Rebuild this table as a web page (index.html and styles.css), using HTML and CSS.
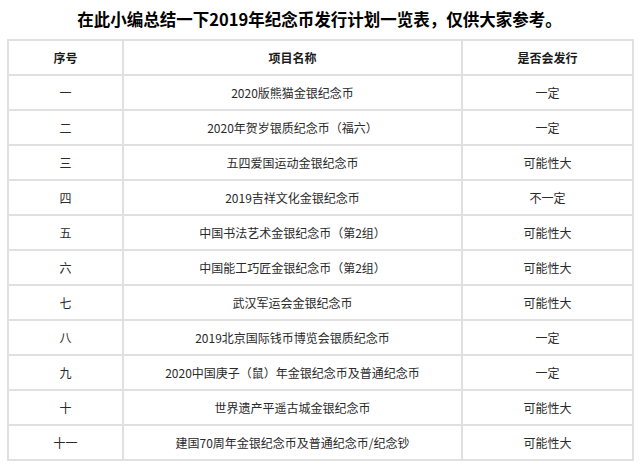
FILE: index.html
```html
<!DOCTYPE html>
<html lang="zh-CN">
<head>
<meta charset="utf-8">
<title>2019年纪念币发行计划一览表</title>
<link rel="stylesheet" href="styles.css">
</head>
<body>
<div class="page">
  <h1 class="title">在此小编总结一下2019年纪念币发行计划一览表，仅供大家参考。</h1>
  <table class="plan">
    <colgroup>
      <col class="c1"><col class="c2"><col class="c3">
    </colgroup>
    <thead>
      <tr><th>序号</th><th>项目名称</th><th>是否会发行</th></tr>
    </thead>
    <tbody>
      <tr><td>一</td><td>2020版熊猫金银纪念币</td><td>一定</td></tr>
      <tr><td>二</td><td>2020年贺岁银质纪念币（福六）</td><td>一定</td></tr>
      <tr><td>三</td><td>五四爱国运动金银纪念币</td><td>可能性大</td></tr>
      <tr><td>四</td><td>2019吉祥文化金银纪念币</td><td>不一定</td></tr>
      <tr><td>五</td><td>中国书法艺术金银纪念币（第2组）</td><td>可能性大</td></tr>
      <tr><td>六</td><td>中国能工巧匠金银纪念币（第2组）</td><td>可能性大</td></tr>
      <tr><td>七</td><td>武汉军运会金银纪念币</td><td>可能性大</td></tr>
      <tr><td>八</td><td>2019北京国际钱币博览会银质纪念币</td><td>一定</td></tr>
      <tr><td>九</td><td>2020中国庚子（鼠）年金银纪念币及普通纪念币</td><td>一定</td></tr>
      <tr><td>十</td><td>世界遗产平遥古城金银纪念币</td><td>可能性大</td></tr>
      <tr><td>十一</td><td>建国70周年金银纪念币及普通纪念币/纪念钞</td><td>可能性大</td></tr>
    </tbody>
  </table>
</div>
</body>
</html>
```
FILE: styles.css
```css
html, body {
  margin: 0;
  padding: 0;
  background: #fff;
}
body {
  font-family: "Noto Sans CJK SC", "Noto Sans", "Liberation Sans", sans-serif;
  color: #2a2a2a;
}
.page {
  width: 640px;
  padding: 0 8px 0 7px;
  box-sizing: border-box;
}
.title {
  margin: 0;
  height: 39px;
  line-height: 38px;
  font-size: 16.5px;
  font-weight: bold;
  color: #000;
  text-align: center;
}
.plan {
  width: 625px;
  border-collapse: collapse;
  table-layout: fixed;
  font-size: 12px;
}
.plan .c1 { width: 115px; }
.plan .c2 { width: 339px; }
.plan .c3 { width: 171px; }
.plan th,
.plan td {
  border: 2px solid #e0e0e0;
  height: 33px;
  padding: 0 4px;
  text-align: center;
  vertical-align: middle;
  line-height: 16px;
}
.plan th {
  font-weight: bold;
  color: #1a1a1a;
}
```
